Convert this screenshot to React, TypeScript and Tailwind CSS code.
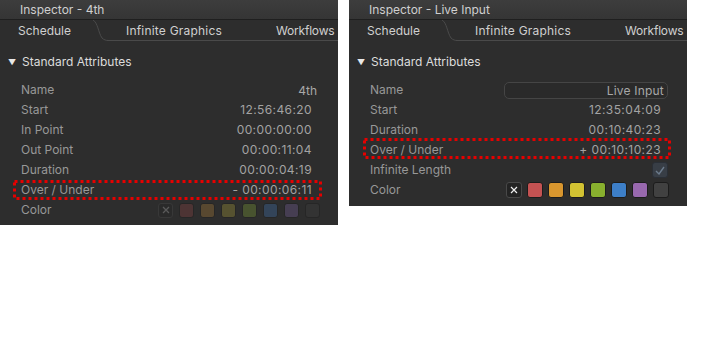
import React from "react";

type Row = { label: string; value?: string };

const font = { fontFamily: "Inter, 'Noto Sans', sans-serif" };

function TabBar() {
  return (
    <div className="relative h-[21px] flex items-center text-[12px] text-[#d0d0d0]">
      <div className="absolute left-[107px] right-0 bottom-0 h-px bg-[#4a4a4a]" />
      <svg className="absolute left-[92px] top-0" width="17" height="21" viewBox="0 0 17 21">
        <path d="M1 0 C 6 3, 6 12, 10 18 C 12 20, 14 20.5, 17 20.5" fill="none" stroke="#4a4a4a" strokeWidth="1" />
      </svg>
      <span className="absolute left-[18px]">Schedule</span>
      <span className="absolute left-[126px] tracking-[0.2px]">Infinite Graphics</span>
      <span className="absolute left-[276px] whitespace-nowrap tracking-[-0.2px]">Workflows</span>
    </div>
  );
}

function ClearBox({ dim }: { dim: boolean }) {
  if (dim) {
    return (
      <div className="w-[15px] h-[15px] rounded-[3px] bg-[#2a2a2a] border border-[#383838] flex items-center justify-center">
        <svg width="8" height="8" viewBox="0 0 8 8">
          <path d="M1 1 L7 7 M7 1 L1 7" stroke="#5a5a5a" strokeWidth="1.3" />
        </svg>
      </div>
    );
  }
  return (
    <div className="w-4 h-4 rounded-[3px] bg-[#232323] border border-[#484848] flex items-center justify-center">
      <svg width="8" height="8" viewBox="0 0 8 8">
        <path d="M1 1 L7 7 M7 1 L1 7" stroke="#eeeeee" strokeWidth="1.2" />
      </svg>
    </div>
  );
}

function Swatches({ dim }: { dim: boolean }) {
  const bright = ["#c45252", "#d8962e", "#d2c232", "#88b02e", "#3d7fc8", "#9868ae", "#414141"];
  const muted = ["#4d3434", "#584830", "#565230", "#48532f", "#334459", "#463e52", "#333333"];
  const cols = dim ? muted : bright;
  const size = dim ? "w-[15px] h-[15px]" : "w-4 h-4";
  return (
    <div className={`flex items-center ${dim ? "gap-[6px]" : "gap-[5px]"}`}>
      <ClearBox dim={dim} />
      {cols.map((c) => (
        <div
          key={c}
          className={`${size} rounded-[3px] border ${dim ? "border-[#262626]" : "border-[#1c1c1c]"}`}
          style={{ backgroundColor: c }}
        />
      ))}
    </div>
  );
}

function Panel({ title, rows, height, live }: { title: string; rows: Row[]; height: string; live: boolean }) {
  return (
    <div className={`relative w-[338px] ${height} bg-[#2d2d2d] flex flex-col`} style={font}>
      <div className="h-[20px] bg-gradient-to-b from-[#3d3d3d] to-[#353535] border-b border-[#1f1f1f] flex items-center pl-[20px] text-[12px] text-[#cfcfcf]">
        {title}
      </div>
      <TabBar />
      <div className="mt-[11px] h-5 flex items-center pl-[8px] text-[12px] text-[#dcdcdc]">
        <span className="text-[8px] mr-[6px] text-[#e8e8e8]">▼</span>
        Standard Attributes
      </div>
      <div className="mt-[8px] flex flex-col text-[12px] text-[#989898]">
        {rows.map((r) => (
          <div key={r.label} className="h-5 flex items-center justify-between pl-[21px] pr-[26px]">
            <span>{r.label}</span>
            {r.label === "Name" && live ? (
              <div className="w-[164px] h-[17px] -mr-[7px] rounded-[5px] border border-[#454545] bg-[#2a2a2a] flex items-end justify-end pr-[3px] text-[#a8a8a8] leading-[15px] tracking-[0.2px]">
                {r.value}
              </div>
            ) : r.label === "Name" ? (
              <span className="-mr-[5px] translate-y-[1px] text-[#a8a8a8]">{r.value}</span>
            ) : r.label === "Color" ? (
              <div className="-mr-[8px]">
                <Swatches dim={!live} />
              </div>
            ) : r.label === "Infinite Length" ? (
              <div className="-mr-[7px] w-4 h-4 rounded-[3px] bg-[#383e46] border border-[#2a2f36] flex items-center justify-center">
                <svg width="10" height="9" viewBox="0 0 10 9">
                  <path d="M1 5 L4 8 L9 1" fill="none" stroke="#6c7b8c" strokeWidth="1.4" />
                </svg>
              </div>
            ) : (
              <span className="text-[#a3a3a3] tracking-[0.4px]">{r.value}</span>
            )}
          </div>
        ))}
      </div>
    </div>
  );
}

function RedBox({ className, w, h }: { className: string; w: number; h: number }) {
  return (
    <svg className={`absolute ${className}`} width={w} height={h} viewBox={`0 0 ${w} ${h}`}>
      <rect x="1.5" y="1.5" width={w - 3} height={h - 3} fill="none" stroke="#e60000" strokeWidth="3" strokeDasharray="3 3" />
    </svg>
  );
}

export default function App() {
  return (
    <div className="w-[707px] h-[344px] bg-white flex items-start gap-[11px]">
      <div className="relative">
        <Panel
          title="Inspector - 4th"
          height="h-[225px]"
          live={false}
          rows={[
            { label: "Name", value: "4th" },
            { label: "Start", value: "12:56:46:20" },
            { label: "In Point", value: "00:00:00:00" },
            { label: "Out Point", value: "00:00:11:04" },
            { label: "Duration", value: "00:00:04:19" },
            { label: "Over / Under", value: "- 00:00:06:11" },
            { label: "Color" },
          ]}
        />
        <RedBox className="left-[13px] top-[180px]" w={309} h={20} />
      </div>
      <div className="relative">
        <Panel
          title="Inspector - Live Input"
          height="h-[206px]"
          live={true}
          rows={[
            { label: "Name", value: "Live Input" },
            { label: "Start", value: "12:35:04:09" },
            { label: "Duration", value: "00:10:40:23" },
            { label: "Over / Under", value: "+ 00:10:10:23" },
            { label: "Infinite Length" },
            { label: "Color" },
          ]}
        />
        <RedBox className="left-[14px] top-[138px]" w={308} h={21} />
      </div>
    </div>
  );
}
